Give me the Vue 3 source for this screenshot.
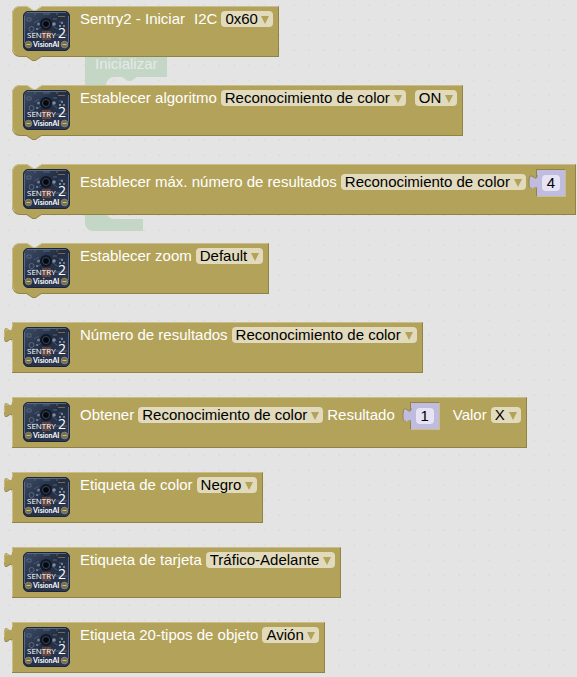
<script setup>
import { ref } from 'vue'

const blocks = ref([
  { kind: 'statement', parts: [
    { type: 'label', text: 'Sentry2 - Iniciar' },
    { type: 'label', text: 'I2C', wide: true },
    { type: 'select', text: '0x60', name: 'Dirección I2C' }
  ] },
  { kind: 'statement', parts: [
    { type: 'label', text: 'Establecer algoritmo' },
    { type: 'select', text: 'Reconocimiento de color', name: 'Algoritmo' },
    { type: 'select', text: 'ON', name: 'Estado', wide: true }
  ] },
  { kind: 'statement', tall: true, parts: [
    { type: 'label', text: 'Establecer máx. número de resultados' },
    { type: 'select', text: 'Reconocimiento de color', name: 'Algoritmo' },
    { type: 'number', text: '4', name: 'Máximo' }
  ] },
  { kind: 'statement', parts: [
    { type: 'label', text: 'Establecer zoom' },
    { type: 'select', text: 'Default', name: 'Zoom' }
  ] },
  { kind: 'value', parts: [
    { type: 'label', text: 'Número de resultados' },
    { type: 'select', text: 'Reconocimiento de color', name: 'Algoritmo' }
  ] },
  { kind: 'value', tall: true, parts: [
    { type: 'label', text: 'Obtener' },
    { type: 'select', text: 'Reconocimiento de color', name: 'Algoritmo' },
    { type: 'label', text: 'Resultado' },
    { type: 'number', text: '1', name: 'Resultado', wide: true },
    { type: 'label', text: 'Valor', wide: true },
    { type: 'select', text: 'X', name: 'Valor' }
  ] },
  { kind: 'value', parts: [
    { type: 'label', text: 'Etiqueta de color' },
    { type: 'select', text: 'Negro', name: 'Color' }
  ] },
  { kind: 'value', parts: [
    { type: 'label', text: 'Etiqueta de tarjeta' },
    { type: 'select', text: 'Tráfico-Adelante', name: 'Tarjeta' }
  ] },
  { kind: 'value', parts: [
    { type: 'label', text: 'Etiqueta 20-tipos de objeto' },
    { type: 'select', text: 'Avión', name: 'Objeto' }
  ] }
])

const shapes = {
  statement: 'M60 0H30L24 4H21L15 0H8A8 8 0 0 0 0 8V42A8 8 0 0 0 8 50H14.500L20.500 54H23.500L29.500 50H60Z',
  value: 'M60 0H0V5C0 15 -8 -3 -8 12.500S0 10 0 20V50H60Z'
}
const lights = {
  statement: 'M60 .5H30L24 4.500H21L15 .5H8A7.500 7.500 0 0 0 .5 8V42A8 8 0 0 0 3 47.500',
  value: 'M60 .5H.5V5M-7.500 15C-8 8 -7 7 -4 8M.5 18V50'
}
</script>

<template>
  <main class="workspace">
    <svg class="ghost" viewBox="0 0 84 190" aria-hidden="true">
      <path d="M0 0H82V36H52L46 40H43L37 36H29A8 8 0 0 0 21 44V60H0Z" />
      <path d="M0 160H21V170A8 8 0 0 0 29 178H58V190H8A8 8 0 0 1 0 182Z" />
      <text x="10" y="28">Inicializar</text>
    </svg>

    <svg class="defs" aria-hidden="true">
      <defs>
        <linearGradient id="board" x1="0" y1="0" x2="1" y2="1">
          <stop offset="0" stop-color="#3d4c66" />
          <stop offset=".45" stop-color="#232e43" />
          <stop offset="1" stop-color="#303c56" />
        </linearGradient>
        <symbol id="module" viewBox="0 0 47 40">
          <rect x=".5" y=".5" width="46" height="39" rx="4.500" fill="url(#board)" stroke="#1d2638" />
          <path d="M4 1.500H43M1.500 5V32M45.500 5V32" stroke="#66758f" stroke-width=".8" />
          <path d="M12 1V4M34 1V4M4 7H8V10H4ZM30 8H34M7 22H15M32 24H44M20 3H27" stroke="#53647f" fill="none" />
          <path d="M35 5.500H42" stroke="#877a49" stroke-width=".8" />
          <path d="M11 12L16 9M14 19L18 16M29 14L34 18M36 11H40" stroke="#465875" />
          <circle cx="8.500" cy="18" r="2.500" fill="none" stroke="#64748e" stroke-width=".8" />
          <circle cx="15.500" cy="13" r="1.600" fill="#687890" />
          <circle cx="31" cy="13" r="1.800" fill="#7c8ba0" />
          <circle cx="14" cy="18" r="1" fill="#7888a0" />
          <circle cx="37" cy="15" r="1" fill="#a0aab8" />
          <circle cx="41" cy="15" r="1" fill="#8997ab" />
          <circle cx="39" cy="12" r="1" fill="#8997ab" />
          <circle cx="23" cy="13" r="6" fill="#111824" />
          <circle cx="23" cy="13" r="3.500" fill="#05080e" stroke="#39465b" />
          <path d="M19 20H28V29H19Z" fill="#593e3a" />
          <path d="M20 20V29M23 20V29M26 20V29" stroke="#80564a" stroke-width=".7" />
          <circle cx="5.500" cy="33.500" r="3.300" fill="#786f43" stroke="#8b919a" stroke-width=".8" />
          <circle cx="41.500" cy="33.500" r="3.300" fill="#786f43" stroke="#8b919a" stroke-width=".8" />
          <path d="M3.500 33.500H7.500M39.500 33.500H43.500" stroke="#d0c36b" />
          <text class="brand" x="4" y="27">SENTRY</text>
          <text class="brand two" x="35" y="27">2</text>
          <text class="brand vision" x="10" y="36">VisionAI</text>
        </symbol>
      </defs>
    </svg>

    <section v-for="(block, i) in blocks" :key="i" class="block" :class="[block.kind, { tall: block.tall }]">
      <svg class="cap" viewBox="0 0 60 51" aria-hidden="true">
        <path class="shade" :d="shapes[block.kind]" transform="translate(0 1)" />
        <path class="fill" :d="shapes[block.kind]" />
        <path class="light" :d="lights[block.kind]" />
        <use href="#module" x="11" y="5" width="47" height="40" />
      </svg>
      <div class="body">
        <template v-for="(part, j) in block.parts" :key="j">
          <span v-if="part.type === 'label'" class="label" :class="{ wide: part.wide }">{{ part.text }}</span>
          <span v-else-if="part.type === 'select'" class="picker" :class="{ wide: part.wide }">
            <select :aria-label="part.name"><option>{{ part.text }}</option></select>
            <svg class="arrow" viewBox="0 0 8 8" aria-hidden="true"><path d="M0 0H8L4 8Z" /></svg>
          </span>
          <span v-else class="number" :class="{ wide: part.wide }">
            <svg class="plug" viewBox="0 0 8 28" aria-hidden="true">
              <path class="plug-fill" d="M9 5H8C8 15 0 -3 0 12.500S8 10 8 20H9Z" />
              <path class="plug-edge" d="M8 5C8 15 0 -3 0 12.500C0 18 1 19 3 18" />
            </svg>
            <input v-model="part.text" type="text" inputmode="numeric" :aria-label="part.name" />
          </span>
        </template>
      </div>
    </section>
  </main>
</template>

<style>
body {
  margin: 0;
  background: #e4e4e4;
}
</style>

<style scoped>
.workspace {
  position: relative;
  box-sizing: border-box;
  min-height: 100vh;
  padding: 6px 0 4px 12px;
  overflow: hidden;
  font-family: "Liberation Sans", Arial, sans-serif;
  font-size: 15px;
  line-height: 16px;
  background: radial-gradient(circle, #dcdcdc 1px, transparent 1px) 2px -2px / 15px 15px #e4e4e4;
}
.ghost {
  position: absolute;
  left: 85px;
  top: 41px;
  width: 84px;
  height: 190px;
  fill: #c4d6c6;
}
.ghost text {
  fill: #e6eae6;
}
.defs {
  position: absolute;
  width: 0;
  height: 0;
}
.brand {
  font-family: "Open Sans", "Noto Sans", sans-serif;
  font-size: 8px;
  font-weight: 400;
  fill: #fff;
}
.two {
  font-size: 14px;
}
.vision {
  font-family: Lato, sans-serif;
  font-size: 7px;
  font-weight: 700;
}
.block {
  position: relative;
  display: flex;
  width: max-content;
  height: 51px;
  margin-bottom: 28px;
}
.block.value {
  margin-bottom: 24px;
}
.block:last-child {
  margin-bottom: 0;
}
.cap {
  flex: none;
  width: 60px;
  height: 51px;
  overflow: visible;
}
.shade {
  fill: #8f8348;
}
.fill {
  fill: #b3a35a;
}
.light {
  fill: none;
  stroke: #c9be8a;
}
.body {
  display: flex;
  align-items: flex-start;
  gap: 4px;
  box-sizing: border-box;
  padding: 4px 5px 0 8px;
  background: #b3a35a;
  border-top: 1px solid #c9be8a;
  border-right: 1px solid #8f8348;
  border-bottom: 1px solid #8f8348;
}
.tall .body {
  padding-top: 9px;
}
.label {
  color: #fff;
  white-space: pre;
}
.wide {
  margin-left: 5px;
}
.picker {
  position: relative;
  display: flex;
}
select {
  appearance: none;
  height: 16px;
  margin: 0;
  padding: 0 15px 0 4px;
  border: 0;
  border-radius: 4px;
  background: #e1dabd;
  color: #000;
  font: inherit;
}
.arrow {
  position: absolute;
  right: 4px;
  top: 5px;
  width: 8px;
  height: 8px;
  fill: #b3a35a;
  pointer-events: none;
}
.number {
  position: relative;
  box-sizing: border-box;
  display: flex;
  height: 28px;
  margin: -5px 4px 0 6px;
  padding: 5px;
  border: 1px solid;
  border-color: #8f8348 #c9be8a #c9be8a #8f8348;
  background: #bfbce0;
}
.number.wide {
  margin: -5px 4px 0 11px;
}
.plug {
  position: absolute;
  left: -8px;
  top: 0;
  width: 8px;
  height: 28px;
  overflow: visible;
}
.plug-fill {
  fill: #bfbce0;
}
.plug-edge {
  fill: none;
  stroke: #8f8348;
}
input {
  box-sizing: border-box;
  width: 18px;
  height: 16px;
  padding: 0;
  border: 0;
  border-radius: 4px;
  background: #e6e4f4;
  color: #000;
  font: inherit;
  text-align: center;
}
</style>
